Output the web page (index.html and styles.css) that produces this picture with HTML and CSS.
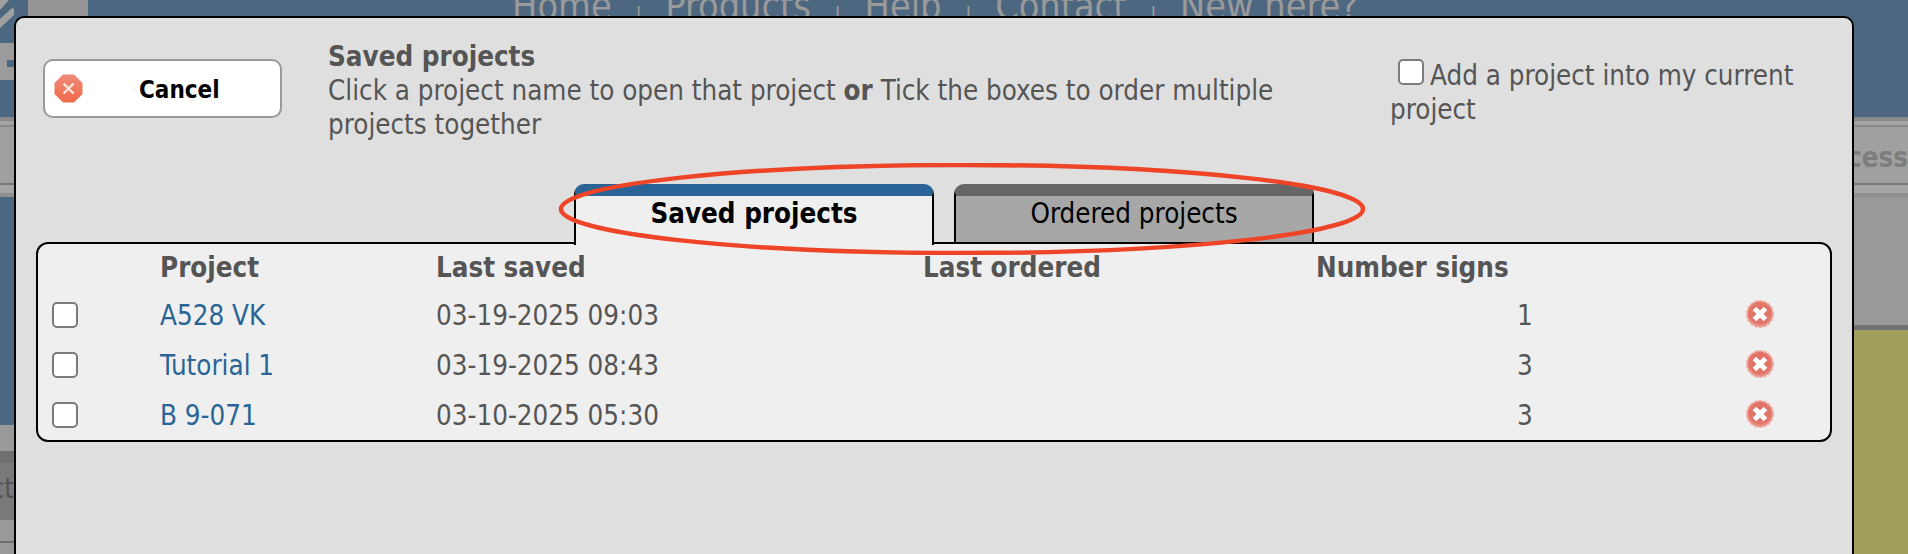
FILE: index.html
```html
<!DOCTYPE html>
<html lang="en">
<head>
    <meta charset="UTF-8">
    <title>Saved projects</title>
    <link rel="stylesheet" href="styles.css">
</head>
<body>
    <!-- page behind the dialog -->
    <div class="backdrop">
        <div class="site-header">
            <svg class="logo" viewBox="0 0 88 117">
                <rect x="28" y="0" width="60" height="17" fill="#959595"/>
                <polygon points="0,0 9,0 0,10" fill="#a0a0a0"/>
                <polygon points="0,19 12,8 14,9 14,15 0,28" fill="#a0a0a0"/>
                <rect x="0" y="43" width="14" height="37" fill="#9b9b9b"/>
                <rect x="7" y="60" width="7" height="7" fill="#4e6781"/>
            </svg>
            <nav class="site-nav">
                <span>Home</span><i>|</i>
                <span>Products</span><i>|</i>
                <span>Help</span><i>|</i>
                <span>Contact</span><i>|</i>
                <span>New here?</span>
            </nav>
        </div>
        <div class="toolbar">
            <span class="toolbar-text">ccess</span>
        </div>
        <div class="main-area">
            <div class="side-left">
                <div class="side-blue"></div>
                <div class="side-grey"></div>
                <div class="side-dark"></div>
                <div class="side-label">ct</div>
                <div class="side-rest"></div>
            </div>
            <div class="side-right">
                <div class="side-right-grey"></div>
                <div class="side-right-olive"></div>
            </div>
        </div>
    </div>

    <div class="dialog">
        <div class="dialog-top">
            <button class="cancel-btn">
                <svg class="cancel-icon" viewBox="0 0 29 29">
                    <defs>
                        <linearGradient id="cancelFill" x1="0" y1="0" x2="0" y2="1">
                            <stop offset="0" stop-color="#ee8a7a"/>
                            <stop offset="1" stop-color="#f0694a"/>
                        </linearGradient>
                    </defs>
                    <polygon points="9,0.5 20,0.5 28.5,9 28.5,20 20,28.5 9,28.5 0.5,20 0.5,9" fill="url(#cancelFill)"/>
                    <path d="M9.5 9.5L19.5 19.5M19.5 9.5L9.5 19.5" stroke="#fbe4df" stroke-width="2.4"/>
                </svg>
                <span>Cancel</span>
            </button>
            <div class="intro">
                <strong>Saved projects</strong><br>
                Click a project name to open that project <b>or</b> Tick the boxes to order multiple projects together
            </div>
            <label class="add-project"><input type="checkbox" class="check">Add a project into my current project</label>
        </div>

        <div class="tabs">
            <div class="tab active">Saved projects</div>
            <div class="tab">Ordered projects</div>
        </div>

        <div class="panel">
            <div class="row head">
                <div></div>
                <div>Project</div>
                <div>Last saved</div>
                <div>Last ordered</div>
                <div>Number signs</div>
                <div></div>
            </div>
            <div class="row">
                <div><input type="checkbox" class="check"></div>
                <div><a href="#">A528 VK</a></div>
                <div>03-19-2025 09:03</div>
                <div></div>
                <div class="num">1</div>
                <div><svg class="del-icon" viewBox="0 0 28 28"><use href="#delGlyph"/></svg></div>
            </div>
            <div class="row">
                <div><input type="checkbox" class="check"></div>
                <div><a href="#">Tutorial 1</a></div>
                <div>03-19-2025 08:43</div>
                <div></div>
                <div class="num">3</div>
                <div><svg class="del-icon" viewBox="0 0 28 28"><use href="#delGlyph"/></svg></div>
            </div>
            <div class="row">
                <div><input type="checkbox" class="check"></div>
                <div><a href="#">B 9-071</a></div>
                <div>03-10-2025 05:30</div>
                <div></div>
                <div class="num">3</div>
                <div><svg class="del-icon" viewBox="0 0 28 28"><use href="#delGlyph"/></svg></div>
            </div>
        </div>

        <!-- red hand-drawn ring from the annotation -->
        <svg class="ring" viewBox="0 0 808 92"><ellipse cx="404" cy="46" rx="401" ry="44" fill="none" stroke="#ee4528" stroke-width="4.5"/></svg>
    </div>

    <svg class="icon-defs" width="0" height="0">
        <defs>
            <radialGradient id="delFill" cx="0.5" cy="0.45" r="0.55">
                <stop offset="0" stop-color="#e4695c"/>
                <stop offset="0.75" stop-color="#e2766a"/>
                <stop offset="1" stop-color="#eb9a90"/>
            </radialGradient>
            <g id="delGlyph">
                <circle cx="14" cy="14" r="13" fill="url(#delFill)" stroke="#eda79e" stroke-width="2" stroke-dasharray="3 1.6"/>
                <path d="M8.5 8.5L19.5 19.5M19.5 8.5L8.5 19.5" stroke="#fff" stroke-width="5"/>
            </g>
        </defs>
    </svg>
</body>
</html>
```

FILE: styles.css
```css
* {
    box-sizing: border-box;
}

html, body {
    margin: 0;
    height: 100%;
    overflow: hidden;
}

body {
    font-family: "DejaVu Sans Condensed", "DejaVu Sans", sans-serif;
    font-stretch: condensed;
    font-size: 27.5px;
    color: #555;
}

/* page behind the dialog */
.backdrop {
    height: 554px;
    display: flex;
    flex-direction: column;
}

.site-header {
    height: 117px;
    flex-shrink: 0;
    background-color: #4e6781;
    display: flex;
}

.logo {
    width: 88px;
    height: 117px;
    flex-shrink: 0;
}

.site-nav {
    margin-left: 424px;
    margin-top: -14px;
    display: flex;
    gap: 23.5px;
    font-size: 37.5px;
    line-height: 40px;
    color: #9a9a9a;
}

.site-nav i {
    font-style: normal;
    font-size: 22px;
    line-height: 58px;
}

.toolbar {
    height: 80px;
    flex-shrink: 0;
    display: flex;
    justify-content: flex-end;
    padding-top: 22px;
    line-height: 36px;
    font-weight: bold;
    color: #7d7d7d;
    background: linear-gradient(#8a8a8a 4px, #a5a5a5 4px 8px, #8a8a8a 8px 10px, #a0a0a0 10px 66px, #777 66px 68px, #a5a5a5 68px 76px, #8f8f8f 76px);
}

.main-area {
    flex: 1;
    display: flex;
    justify-content: space-between;
}

.side-left {
    width: 14px;
    display: flex;
    flex-direction: column;
}

.side-blue {
    height: 228px;
    background-color: #4e6781;
}

.side-grey {
    height: 26px;
    background-color: #999;
}

.side-dark {
    height: 12px;
    background-color: #6f6f6f;
}

.side-label {
    height: 57px;
    line-height: 50px;
    background-color: #7a7a7a;
    display: flex;
    justify-content: flex-end;
}

.side-rest {
    flex: 1;
    background-color: #999;
    padding-top: 21px;
}

.side-rest::before {
    content: "";
    display: block;
    height: 2px;
    background-color: #6f6f6f;
}

.side-right {
    width: 54px;
    display: flex;
    flex-direction: column;
}

.side-right-grey {
    height: 133px;
    background-color: #999;
    border-bottom: 5px solid #727272;
}

.side-right-olive {
    flex: 1;
    background-color: #a0a05c;
}

/* dialog */
.dialog {
    position: absolute;
    left: 14px;
    top: 16px;
    width: 1840px;
    height: 560px;
    background-color: #dfdfdf;
    border: 2px solid #000;
    border-radius: 10px;
    padding: 41px 20px 0;
}

.dialog-top {
    display: flex;
    height: 125px;
}

.cancel-btn {
    width: 239px;
    height: 59px;
    flex-shrink: 0;
    margin-left: 7px;
    padding: 0 0 0 9px;
    display: flex;
    align-items: center;
    background-color: #fff;
    border: 2px solid #999;
    border-radius: 10px;
    font: inherit;
    font-size: 24px;
    font-weight: bold;
    color: #000;
}

.cancel-btn span {
    margin-left: 56px;
    padding-top: 2px;
}

.cancel-icon {
    width: 29px;
    height: 29px;
}

.intro {
    width: 960px;
    flex-shrink: 0;
    margin-left: 46px;
    margin-top: -20px;
    line-height: 34px;
}

.add-project {
    width: 420px;
    flex-shrink: 0;
    margin-left: 102px;
    margin-top: -1px;
    line-height: 34px;
}

.check {
    appearance: none;
    width: 26px;
    height: 26px;
    margin: 0 6px 0 8px;
    vertical-align: 0;
    background-color: #fff;
    border: 2px solid #7b7b7b;
    border-radius: 5px;
}

.tabs {
    display: flex;
    gap: 20px;
    margin-left: 538px;
    position: relative;
}

.tab {
    width: 360px;
    height: 58px;
    line-height: 34px;
    text-align: center;
    color: #000;
    background-color: #a7a7a7;
    border: 2px solid #000;
    border-top: 12px solid #666;
    border-bottom: none;
    border-radius: 10px 10px 0 0;
}

.tab.active {
    height: 61px;
    margin-bottom: -3px;
    background-color: #efefef;
    border-top-color: #2a6496;
    font-weight: bold;
    position: relative;
    z-index: 1;
}

.panel {
    width: 1796px;
    height: 200px;
    background-color: #efefef;
    border: 2px solid #000;
    border-radius: 12px;
    padding-top: 2px;
}

.row {
    display: grid;
    grid-template-columns: 108px 276px 487px 393px 430px 1fr;
    height: 50px;
    align-items: center;
    padding-left: 14px;
}

.row.head {
    height: 44px;
    padding-bottom: 2px;
    font-weight: bold;
}

.num {
    padding-left: 201px;
}

.row a {
    color: #2a6496;
    text-decoration: none;
}

.row .check {
    margin: 0;
    display: block;
}

.del-icon {
    width: 28px;
    height: 28px;
    display: block;
    margin-bottom: 2px;
}

.ring {
    position: absolute;
    left: 542px;
    top: 145px;
    width: 808px;
    height: 92px;
    z-index: 2;
}

.icon-defs {
    position: absolute;
}
```
